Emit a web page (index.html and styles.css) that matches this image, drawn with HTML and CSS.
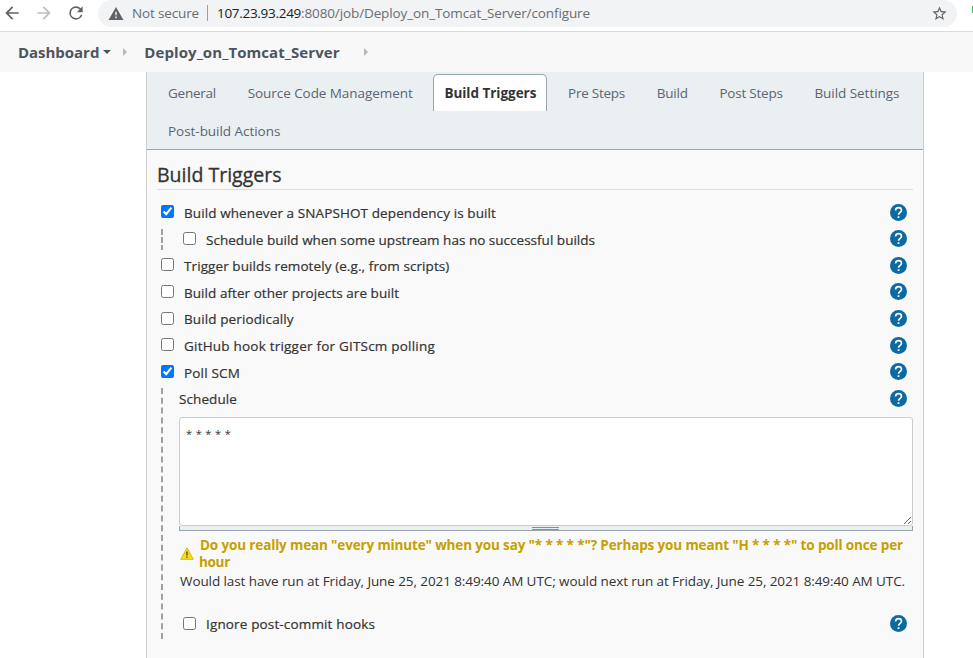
FILE: index.html
```html
<!DOCTYPE html>
<html lang="en">
<head>
<meta charset="utf-8">
<title>Deploy_on_Tomcat_Server Config</title>
<link rel="stylesheet" href="styles.css">
</head>
<body>
<svg class="defs" width="0" height="0">
  <symbol id="help" viewBox="0 0 24 24"><path fill="#0b6aa2" d="M12 0a12 12 0 1 0 0 24 12 12 0 0 0 0-24z"/><path fill="none" stroke="#fff" stroke-width="2.3" d="M7.900 9.200C7.900 6.600 9.700 5.100 12 5.100s4.200 1.500 4.200 3.700c0 2.900-4.100 3.200-4.100 6.500"/><path fill="#fff" d="M10.800 17.300h2.500v2.500h-2.500z"/></symbol>
</svg>
<header class="browser">
  <svg class="nav back" viewBox="0 0 24 24"><path d="M20 11H7.830l5.590-5.590L12 4l-8 8 8 8 1.410-1.410L7.830 13H20v-2z"/></svg>
  <svg class="nav forward" viewBox="0 0 24 24"><path d="M12 4l-1.410 1.410L16.170 11H4v2h12.170l-5.580 5.590L12 20l8-8z"/></svg>
  <svg class="nav reload" viewBox="0 0 24 24"><path d="M17.650 6.350A7.960 7.960 0 0 0 12 4a8 8 0 1 0 7.730 10h-2.080A6 6 0 1 1 12 6c1.660 0 3.140.69 4.220 1.780L13 11h7V4l-2.350 2.350z"/></svg>
  <div class="omnibox">
    <svg class="insecure" viewBox="0 0 16 14"><path fill="#5f6368" d="M8 0l8 14H0z"/><path fill="#f1f3f4" d="M7.200 5h1.600v4H7.200zM7.200 10.300h1.600v1.700H7.200z"/></svg>
    <span class="t not-secure">Not secure</span>
    <span class="divider"></span>
    <span class="t url-host">107.23.93.249</span><span class="t url-path">:8080/job/Deploy_on_Tomcat_Server/configure</span>
    <svg class="star" viewBox="0 0 24 24"><path d="M22 9.240l-7.190-.62L12 2 9.190 8.630 2 9.240l5.460 4.730L5.820 21 12 17.270 18.180 21l-1.630-7.030L22 9.240zM12 15.400l-3.760 2.270 1-4.280-3.320-2.880 4.380-.38L12 6.100l1.710 4.040 4.380.38-3.320 2.880 1 4.280L12 15.400z"/></svg>
  </div>
  <span class="extension"></span>
</header>
<nav class="crumbs">
  <a class="t crumb-home">Dashboard</a><i class="caret"></i><i class="sep"></i>
  <a class="t crumb-job">Deploy_on_Tomcat_Server</a><i class="sep sep-end"></i>
</nav>
<main class="panel">
  <div class="tabs">
    <a class="tab"><span class="t t-general">General</span></a>
    <a class="tab"><span class="t t-scm">Source Code Management</span></a>
    <a class="tab active"><span class="t t-triggers">Build Triggers</span></a>
    <a class="tab"><span class="t t-pre">Pre Steps</span></a>
    <a class="tab"><span class="t t-build">Build</span></a>
    <a class="tab"><span class="t t-post">Post Steps</span></a>
    <a class="tab"><span class="t t-settings">Build Settings</span></a>
    <a class="tab"><span class="t t-actions">Post-build Actions</span></a>
  </div>
  <section class="content">
    <h2><span class="t heading">Build Triggers</span></h2>
    <div class="rows">
      <label class="row"><input type="checkbox" checked><span class="t l-snapshot">Build whenever a SNAPSHOT dependency is built</span><svg class="help"><use href="#help"/></svg></label>
      <label class="row nested"><input type="checkbox"><span class="t l-upstream">Schedule build when some upstream has no successful builds</span><svg class="help"><use href="#help"/></svg></label>
      <label class="row"><input type="checkbox"><span class="t l-remote">Trigger builds remotely (e.g., from scripts)</span><svg class="help"><use href="#help"/></svg></label>
      <label class="row"><input type="checkbox"><span class="t l-after">Build after other projects are built</span><svg class="help"><use href="#help"/></svg></label>
      <label class="row"><input type="checkbox"><span class="t l-period">Build periodically</span><svg class="help"><use href="#help"/></svg></label>
      <label class="row"><input type="checkbox"><span class="t l-github">GitHub hook trigger for GITScm polling</span><svg class="help"><use href="#help"/></svg></label>
      <label class="row"><input type="checkbox" checked><span class="t l-poll">Poll SCM</span><svg class="help"><use href="#help"/></svg></label>
    </div>
    <div class="poll">
      <div class="row schedule"><span class="t l-schedule">Schedule</span><svg class="help"><use href="#help"/></svg></div>
      <textarea>* * * * *</textarea>
      <div class="handle"><span></span></div>
      <div class="warning">
        <svg viewBox="0 0 14 13"><path fill="#f7dc1b" stroke="#d9b820" d="M7 .8L13.300 12.300H.7z" stroke-linejoin="round"/><path fill="#594c10" d="M6.300 4.500h1.400v4H6.300zM6.300 9.400h1.400v1.400H6.300z"/></svg>
        <p><span class="t w-one">Do you really mean "every minute" when you say "* * * * *"? Perhaps you meant "H * * * *" to poll once per</span><br><span class="t w-two">hour</span></p>
      </div>
      <p class="info"><span class="t w-info">Would last have run at Friday, June 25, 2021 8:49:40 AM UTC; would next run at Friday, June 25, 2021 8:49:40 AM UTC.</span></p>
      <label class="row ignore"><input type="checkbox"><span class="t l-ignore">Ignore post-commit hooks</span><svg class="help"><use href="#help"/></svg></label>
    </div>
  </section>
</main>
</body>
</html>
```
FILE: styles.css
```css
* { box-sizing: border-box; }
body { margin: 0; width: 973px; height: 658px; overflow: hidden; background: #fff; color: #333; font: 13.5px/20px "Open Sans", sans-serif; }
.defs { position: absolute; }
.t { white-space: nowrap; }
p, h2 { margin: 0; }

/* Browser bar */
.browser { display: flex; align-items: center; height: 32px; padding: 0 0 5px 2px; border-bottom: 1px solid #d9dbde; }
.nav { flex: none; width: 20px; height: 20px; fill: #5f6368; }
.forward { margin-left: 12px; fill: #bcbec1; }
.reload { margin-left: 12px; }
.omnibox { display: flex; flex: none; align-items: center; width: 859px; height: 27px; margin-left: 12px; padding: 0 9px 0 10px; background: #f1f3f4; border-radius: 14px; color: #6a6e73; }
.insecure { width: 16px; height: 13px; margin-right: 8px; }
.not-secure { letter-spacing: -.147px; }
.divider { width: 1px; height: 16px; margin: 0 9px 0 8px; background: #9a9da1; }
.url-host { color: #202124; letter-spacing: -.296px; }
.url-path { letter-spacing: -.113px; }
.star { width: 17px; height: 17px; margin-left: auto; fill: #5f6368; }
.extension { width: 1px; height: 7px; margin: 6px 0 0 auto; background: #4bb56a; align-self: flex-start; }

/* Breadcrumbs */
.crumbs { display: flex; align-items: center; height: 40px; padding-left: 18px; background: #f8f8f8; color: #4d545d; font-size: 15px; font-weight: 700; }
.crumb-home { letter-spacing: -.03px; }
.crumb-job { letter-spacing: .07px; }
.caret { margin-left: 4px; border: 4.5px solid transparent; border-top-color: #4d545d; border-bottom: 0; }
.sep { margin: 0 17px 0 11px; border: 4px solid transparent; border-left-color: #b5b8bb; border-right: 0; }
.crumb-home + .caret + .sep { margin-left: 12px; }
.sep-end { margin-left: 24px; }

/* Tabs */
.panel { width: 778px; height: 586px; margin-left: 146px; background: #f9f9f9; border: 1px solid #ccc; border-width: 0 1px; }
.tabs { display: flex; flex-wrap: wrap; align-content: flex-start; height: 78px; padding: 2px 0 0 10px; background: #eaeff2; border-bottom: 1px solid #98a6ad; color: #5c6570; }
.tab { height: 38px; padding: 8px 10px; border: 1px solid transparent; margin-right: 9.700px; }
.active { height: 37px; background: #fff; border-color: #98a6ad; border-bottom: 0; border-radius: 5px 5px 0 0; color: #333; font-weight: 700; }
.t-general { letter-spacing: -.241px; }
.t-scm { letter-spacing: -.062px; }
.t-triggers { letter-spacing: -.027px; }
.t-pre { letter-spacing: -.247px; }
.t-build { letter-spacing: -.216px; }
.t-post { letter-spacing: -.22px; }
.t-settings { letter-spacing: -.046px; }
.t-actions { letter-spacing: -.04px; }

/* Trigger options */
.content { padding: 0 10px; }
h2 { height: 40px; padding-top: 12px; border-bottom: 1px solid #ddd; font-size: 19.500px; line-height: 26px; font-weight: 400; }
.heading { letter-spacing: .01px; -webkit-text-stroke: .3px #333; }
.rows { padding-top: 9.800px; }
.row { display: flex; align-items: center; height: 26.600px; font-weight: 500; padding: 0 6px 0 4px; -webkit-text-stroke: .2px #333; }
.row input { width: 13px; height: 13px; margin: 0 10px 2.900px 0; flex: none; }
.help { width: 17px; height: 17px; margin-left: auto; flex: none; margin-bottom: 1.800px; }
.nested { padding-left: 26px; background: repeating-linear-gradient(#a0a0a0 0 6px, transparent 6px 8px) 4px 3px / 2px 21px no-repeat; }
.nested input { margin-bottom: 2px; }
.l-snapshot { letter-spacing: .1px; }
.l-upstream { letter-spacing: .017px; }
.l-remote { letter-spacing: .09px; }
.l-after { letter-spacing: .049px; }
.l-period { letter-spacing: .11px; }
.l-github { letter-spacing: .211px; }
.l-poll { letter-spacing: .172px; }
.l-schedule { letter-spacing: .092px; }
.l-ignore { letter-spacing: .148px; }

/* Polling schedule */
.poll { margin: 2px 0 0 4px; height: 251px; padding-left: 16px; border-left: 2px dashed #a0a0a0; }
.schedule { height: 26px; padding: 0 6px 0 0; position: relative; top: -2px; margin-bottom: 3.200px; }
textarea { display: block; width: 734px; height: 109px; padding: 7px 6px; border: 1px solid #ccc; border-radius: 3px; background: #fff; color: #333; font: 11px/17px "Open Sans", sans-serif; letter-spacing: .75px; word-spacing: -.75px; }
.handle { height: 5px; border: 1px solid #98a6ad; border-top: 0; background: #eaeff2; display: flex; justify-content: center; }
.handle span { width: 27px; height: 3px; border: 1px solid #849092; border-width: 1px 0; margin: 1px 2px 0 0; }
.warning { display: flex; gap: 6px; margin-top: 6px; padding-left: 1px; color: #c4a000; font-weight: 700; line-height: 17px; }
.warning svg { width: 14px; height: 13px; margin-top: 10px; }
.w-one { letter-spacing: -.139px; }
.w-two { letter-spacing: -.309px; margin-left: -1px; }
.info { padding-left: 1px; }
.w-info { letter-spacing: -.089px; }
.ignore { margin-top: 20px; padding-left: 4px; }
.ignore input { margin-bottom: 2px; }
```
